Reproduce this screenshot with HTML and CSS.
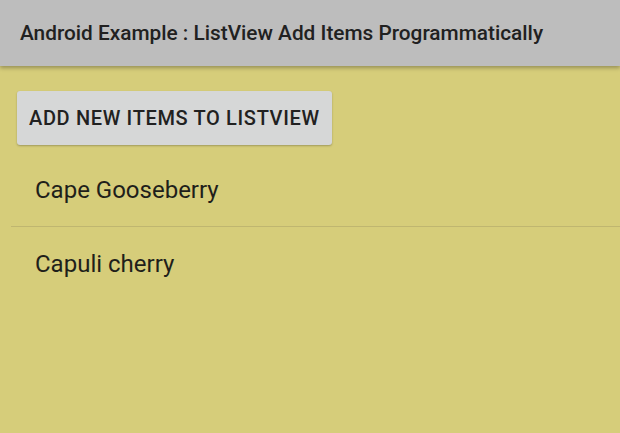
FILE: index.html
```html
<!DOCTYPE html>
<html>
	<head>
		<title>Android Example : ListView Add Items Programmatically</title>
		<meta name="viewport" content="width=device-width, initial-scale=1" />
		<link rel="stylesheet" href="styles.css">
	</head>
	<body>
		<div class="toolbar">
			<h1>Android Example : ListView Add Items Programmatically</h1>
		</div>

		<div class="content">
			<button type="button" class="add-button">Add new items to listview</button>

			<ul class="list">
				<li>Cape Gooseberry</li>
				<li>Capuli cherry</li>
			</ul>
		</div>
	</body>
</html>
```

FILE: styles.css
```css
html,
body {
	height: 100%;
}
body {
	font-family: Roboto, "Noto Sans", sans-serif;
	margin: 0;
	background-color: #d6cd7a;
	color: #212121;
	overflow: hidden;
}
.toolbar {
	background-color: #bdbdbd;
	height: 66px;
	padding: 0 20px;
	display: flex;
	align-items: center;
	box-shadow: 0 2px 4px rgba(0, 0, 0, 0.3);
	position: relative;
}
.toolbar h1 {
	margin: 0;
	font-size: 20.8px;
	font-weight: 500;
	color: #212121;
}
.content {
	padding: 25px 0 0 11px;
}
.add-button {
	margin-left: 6px;
	height: 54px;
	padding: 0 12px;
	background-color: #d6d7d7;
	color: #212121;
	border: none;
	border-radius: 3px;
	box-shadow: 0 1px 2px rgba(0, 0, 0, 0.25);
	font-family: Roboto, "Noto Sans", sans-serif;
	font-size: 20px;
	font-weight: 500;
	letter-spacing: 0.65px;
	text-transform: uppercase;
	display: block;
}
.list {
	list-style: none;
	margin: 8px 0 0;
	padding: 0;
}
.list li {
	height: 73px;
	padding-left: 24px;
	display: flex;
	align-items: center;
	font-size: 24px;
	color: #1f1f1a;
	border-bottom: 1px solid #bfb670;
}
.list li:last-child {
	border-bottom: none;
}
```
